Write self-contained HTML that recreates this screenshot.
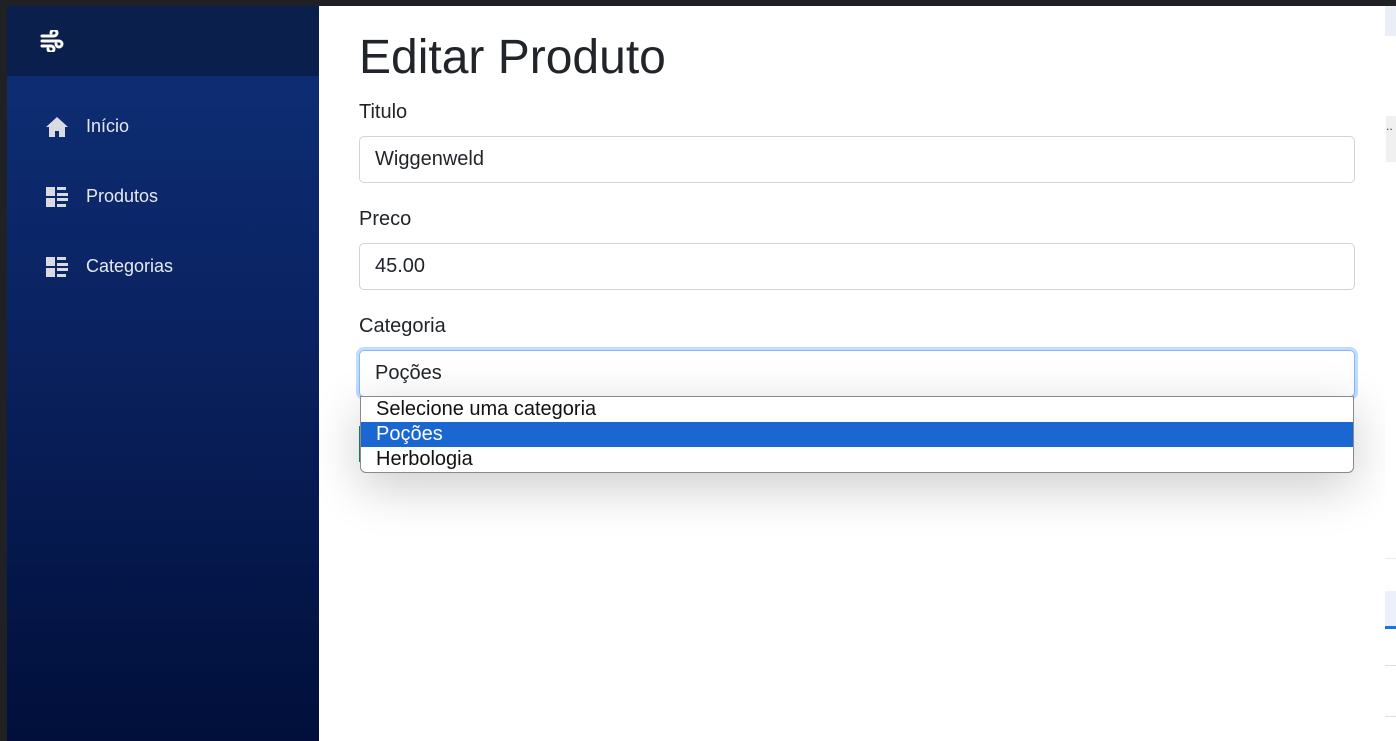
<!DOCTYPE html>
<html><head><meta charset="utf-8"><style>
*{margin:0;padding:0;box-sizing:border-box}
body{width:1396px;height:741px;overflow:hidden;background:#202124;font-family:"Liberation Sans",Arial,sans-serif;position:relative}
.side{position:absolute;left:7px;top:6px;width:312px;height:735px;background:linear-gradient(#0e3078,#0a2260 45%,#010f3a)}
.shead{height:70px;background:#0a1f4b;position:relative}
.nav{position:absolute;left:39px;display:flex;align-items:center;color:#e6e9f0;font-size:18px}
.nav svg{margin-right:18px}
.main{position:absolute;left:319px;top:6px;width:1066px;height:735px;background:#fff}
.rs{position:absolute;left:1385px;top:6px;width:11px;height:735px;background:#fff}
h1{position:absolute;left:40px;top:24px;font-size:48px;font-weight:400;color:#212529}
label{position:absolute;left:40px;font-size:20px;color:#212529}
.inp{position:absolute;left:40px;width:996px;height:47px;border:1px solid #ced4da;border-radius:5px;font-size:20px;color:#212529;padding:11px 15px}
.focus{border-color:#86b7fe;box-shadow:0 0 0 3px #c2dbfe}
.dd{position:absolute;left:41px;top:390px;width:994px;height:77px;background:#fff;border:1px solid #8a8a8a;border-radius:0 0 6px 6px;box-shadow:0 14px 50px rgba(0,0,0,.2);font-size:20px;color:#111}
.dd div{height:25px;line-height:24px;padding-left:15px}
.sel{background:#1a67d2;color:#fff}
</style></head><body>
<div class="side">
 <div class="shead"><svg style="position:absolute;left:33px;top:24px" width="24" height="22" viewBox="0 0 24 22" fill="none" stroke="#fff" stroke-width="3" stroke-linecap="round"><path d="M2 6h12a3 3 0 1 0-3-3"/><path d="M2 11h17a3 3 0 1 1-3 3"/><path d="M2 16h9a3 3 0 1 1-3 3"/></svg></div>
 <div class="nav" style="top:110px"><svg width="22" height="20" viewBox="0 0 22 20"><path d="M11 0L0 10h3v10h6v-6h4v6h6V10h3z" fill="#d8dbe2"/></svg>Início</div>
 <div class="nav" style="top:180px"><svg width="22" height="20" viewBox="0 0 22 20" fill="#d8dbe2"><rect x="0" y="0" width="9" height="9"/><rect x="0" y="11" width="9" height="9"/><rect x="11" y="0" width="9" height="3"/><rect x="11" y="6" width="11" height="3"/><rect x="11" y="11" width="11" height="3"/><rect x="11" y="17" width="9" height="3"/></svg>Produtos</div>
 <div class="nav" style="top:250px"><svg width="22" height="20" viewBox="0 0 22 20" fill="#d8dbe2"><rect x="0" y="0" width="9" height="9"/><rect x="0" y="11" width="9" height="9"/><rect x="11" y="0" width="9" height="3"/><rect x="11" y="6" width="11" height="3"/><rect x="11" y="11" width="11" height="3"/><rect x="11" y="17" width="9" height="3"/></svg>Categorias</div>
</div>
<div class="main">
 <h1>Editar Produto</h1>
 <label style="top:95px">Titulo</label>
 <div class="inp" style="top:130px">Wiggenweld</div>
 <label style="top:202px">Preco</label>
 <div class="inp" style="top:237px">45.00</div>
 <label style="top:309px">Categoria</label>
 <div style="position:absolute;left:40px;top:420px;width:4px;height:36px;background:#198754"></div>
 <div class="inp focus" style="top:344px">Poções</div>
 <div class="dd"><div>Selecione uma categoria</div><div class="sel">Poções</div><div>Herbologia</div></div>
</div>
<div class="rs">
 <div style="position:absolute;top:0;left:0;width:11px;height:30px;background:#e9eef7"></div>
 <div style="position:absolute;top:110px;left:1px;width:10px;height:46px;background:#f0f0f0;font-size:12px;line-height:20px;color:#333">..</div>
 <div style="position:absolute;top:552px;left:0;width:11px;height:1px;background:#e6eaf2"></div>
 <div style="position:absolute;top:585px;left:0;width:11px;height:38px;background:#ebf0fa;border-bottom:3px solid #1a73e8"></div>
 <div style="position:absolute;top:659px;left:0;width:11px;height:1px;background:#dde"></div>
 <div style="position:absolute;top:710px;left:0;width:11px;height:1px;background:#dde"></div>
</div>
<div style="position:absolute;left:0;top:0;width:1396px;height:6px;background:#202124"></div>
</body></html>
